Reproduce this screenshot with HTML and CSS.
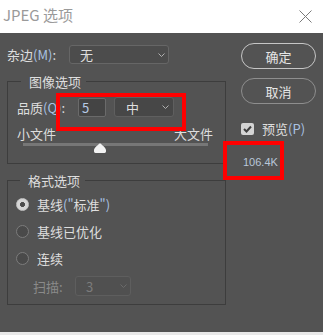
FILE: index.html
```html
<!DOCTYPE html>
<html lang="zh">
<head>
<meta charset="utf-8">
<title>JPEG 选项</title>
<link rel="stylesheet" href="styles.css">
</head>
<body>
<div class="win">
  <div class="titlebar">
    <span class="title">JPEG 选项</span>
    <svg class="close" width="13" height="13" viewBox="0 0 13 13"><path d="M0.5 0.5 L12.5 12.5 M12.5 0.5 L0.5 12.5" stroke="#7a7a7a" stroke-width="1" fill="none"/></svg>
  </div>
  <div class="content">
    <div class="left">
      <div class="row matte">
        <span class="lbl matte-lbl">杂边<span class="hot">(M)</span>:</span>
        <div class="select sel-matte"><span>无</span><svg class="chev" width="7" height="4" viewBox="0 0 7 4"><polyline points="0.5,0.5 3.5,3.5 6.5,0.5" fill="none" stroke="#b0b0b0" stroke-width="1"/></svg></div>
      </div>
      <fieldset class="group g1">
        <legend>图像选项</legend>
        <div class="row quality">
          <span class="lbl q-lbl">品质<span class="hot">(Q)</span>:</span>
          <div class="input">5</div>
          <div class="select sel-q"><span>中</span><svg class="chev" width="7" height="4" viewBox="0 0 7 4"><polyline points="0.5,0.5 3.5,3.5 6.5,0.5" fill="none" stroke="#b0b0b0" stroke-width="1"/></svg></div>
        </div>
        <div class="scale"><span>小文件</span><span>大文件</span></div>
        <div class="slider">
          <div class="track"></div>
          <svg class="thumb" style="left:41.6%" width="12" height="10" viewBox="0 0 12 10"><path d="M6 0.3 C7.6 1.8 12 4.6 12 7.2 L12 8.6 Q12 10 10.6 10 L1.4 10 Q0 10 0 8.6 L0 7.2 C0 4.6 4.4 1.8 6 0.3 Z" fill="#f2f2f2"/></svg>
        </div>
      </fieldset>
      <fieldset class="group g2">
        <legend>格式选项</legend>
        <div class="radio-row"><span class="radio on"></span><span>基线<span class="hot">("</span>标准<span class="hot">")</span></span></div>
        <div class="radio-row"><span class="radio"></span><span>基线已优化</span></div>
        <div class="radio-row"><span class="radio"></span><span>连续</span></div>
        <div class="row scan">
          <span class="lbl scan-lbl">扫描:</span>
          <div class="select sel-scan"><span>3</span><svg class="chev" width="7" height="4" viewBox="0 0 7 4"><polyline points="0.5,0.5 3.5,3.5 6.5,0.5" fill="none" stroke="#6a6a6a" stroke-width="1"/></svg></div>
        </div>
      </fieldset>
    </div>
    <div class="right">
      <div class="btn primary">确定</div>
      <div class="btn">取消</div>
      <div class="check-row">
        <span class="checkbox"><svg width="13" height="12" viewBox="0 0 13 12"><polyline points="3,6 5.5,8.5 10,3.5" fill="none" stroke="#3f3f3f" stroke-width="2"/></svg></span>
        <span>预览<span class="hot">(P)</span></span>
      </div>
      <div class="size">106.4K</div>
    </div>
  </div>
  <div class="strip"></div>
  <div class="mark m1"></div>
  <div class="mark m2"></div>
</div>
</body>
</html>
```
FILE: styles.css
```css
html, body {
  margin: 0;
  padding: 0;
}
body {
  background: #535353;
  font-family: "Noto Sans CJK SC", "Noto Sans", sans-serif;
  font-size: 13px;
  color: #dedede;
}
.win {
  position: relative;
  width: 323px;
  height: 335px;
  display: flex;
  flex-direction: column;
  overflow: hidden;
}
.titlebar {
  height: 33px;
  flex: none;
  background: #ffffff;
  display: flex;
  align-items: center;
  justify-content: space-between;
  padding: 0 11px 4px 3px;
  box-sizing: border-box;
}
.title {
  font-size: 15px;
  line-height: 20px;
  color: #9a9a9a;
}
.close {
  display: block;
  margin-top: 3px;
}
.content {
  flex: 1;
  display: flex;
  gap: 15px;
  padding: 0 7px;
}
.left {
  width: 219px;
  display: flex;
  flex-direction: column;
}
.right {
  width: 75px;
  display: flex;
  flex-direction: column;
  padding-top: 10px;
}
.strip {
  height: 3px;
  flex: none;
  background: #e9e9e9;
}
.row {
  display: flex;
  align-items: center;
}
.lbl {
  line-height: 17px;
  white-space: nowrap;
}
.hot {
  color: #a9c2e2;
}
.matte {
  margin-top: 12px;
  height: 19px;
}
.matte-lbl {
  width: 62px;
}
.select {
  box-sizing: border-box;
  display: flex;
  align-items: center;
  justify-content: space-between;
  border: 1px solid #666666;
  border-radius: 3px;
  background: #4c4c4c;
  line-height: 17px;
}
.chev {
  display: block;
}
.sel-matte {
  width: 100px;
  height: 19px;
  padding: 0 3px 0 10px;
}
.group {
  margin: 0;
  border: 1px solid #3d3d3d;
  min-inline-size: 0;
}
.group legend {
  font-size: 13px;
  line-height: 17px;
  padding: 0 5px 0 8px;
  margin-left: 4px;
}
.g1 {
  margin-top: 9px;
  padding: 7px 12px 9px 9px;
}
.quality {
  height: 20px;
}
.q-lbl {
  width: 61px;
}
.input {
  box-sizing: border-box;
  width: 28px;
  height: 19px;
  border: 1px solid #6a6a6a;
  border-radius: 2px;
  background: #444444;
  padding-left: 3px;
  line-height: 17px;
  color: #b8cbe6;
}
.sel-q {
  margin-left: 8px;
  width: 60px;
  height: 20px;
  padding: 0 4px 0 11px;
  border-color: #5f5f5f;
  background: #474747;
}
.scale {
  margin-top: 8px;
  display: flex;
  justify-content: space-between;
  line-height: 17px;
}
.slider {
  position: relative;
  height: 11px;
  margin: 0 5px 0 6px;
}
.track {
  margin-top: 1px;
  height: 3px;
  background: #777777;
}
.thumb {
  position: absolute;
  top: 0;
  margin-left: -6px;
  display: block;
}
.g2 {
  margin-top: 8px;
  padding: 5px 12px 8px 8px;
  display: flex;
  flex-direction: column;
  gap: 7px;
}
.radio-row {
  height: 20px;
  display: flex;
  align-items: center;
  gap: 8px;
  line-height: 17px;
}
.radio {
  box-sizing: border-box;
  width: 13px;
  height: 13px;
  border-radius: 50%;
  border: 1px solid #7c7c7c;
  background: #4a4a4a;
}
.radio.on {
  border-color: #c4c4c4;
  background: radial-gradient(circle, #4d4d4d 0 2.2px, #d6d6d6 2.8px);
}
.scan {
  margin-top: 1px;
  height: 20px;
  padding-left: 17px;
}
.scan-lbl {
  width: 42px;
  color: #8a8a8a;
}
.sel-scan {
  width: 56px;
  height: 20px;
  padding: 0 3px 0 10px;
  border-color: #5e5e5e;
  background: #505050;
  color: #7c7c7c;
}
.btn {
  box-sizing: border-box;
  height: 26px;
  border: 1px solid #8e8e8e;
  border-radius: 13px;
  display: flex;
  align-items: center;
  justify-content: center;
  color: #e6e6e6;
  line-height: 17px;
}
.btn + .btn {
  margin-top: 9px;
}
.btn.primary {
  border-color: #c6c6c6;
}
.check-row {
  margin-top: 16px;
  height: 17px;
  display: flex;
  align-items: center;
  gap: 8px;
  line-height: 17px;
}
.checkbox {
  width: 13px;
  height: 12px;
  border-radius: 2px;
  background: #d4d4d4;
}
.checkbox svg {
  display: block;
}
.size {
  margin-top: 18px;
  padding-left: 2px;
  font-family: "Liberation Sans", sans-serif;
  font-size: 11px;
  line-height: 15px;
  color: #b9c7d9;
}
.mark {
  position: absolute;
  box-sizing: border-box;
  border: 4px solid #ff0000;
}
.m1 {
  left: 56px;
  top: 93px;
  width: 130px;
  height: 38px;
}
.m2 {
  left: 223px;
  top: 141px;
  width: 61px;
  height: 39px;
}
```
